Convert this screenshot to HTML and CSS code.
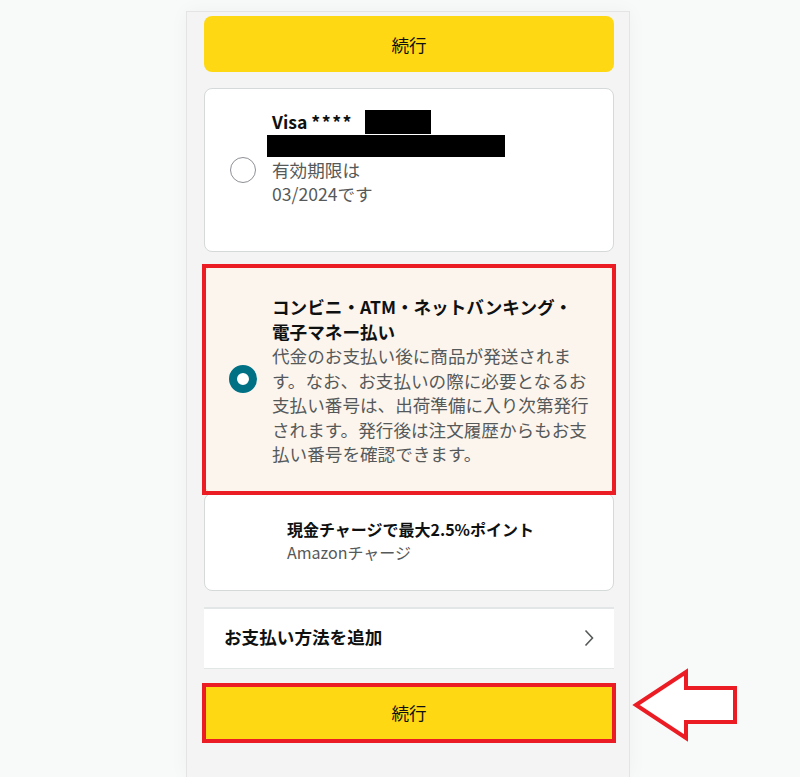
FILE: index.html
```html
<!DOCTYPE html>
<html lang="ja">
<head>
<meta charset="utf-8">
<title>お支払い方法の選択</title>
<link rel="stylesheet" href="styles.css">
</head>
<body>
<div class="panel">
  <button class="btn">続行</button>

  <div class="card">
    <div class="radio-slot"><span class="radio"></span></div>
    <div class="card-body visa">
      <div class="title">Visa <span class="stars">****</span><span class="redact redact-a"></span></div>
      <span class="redact redact-b"></span>
      <div class="muted">有効期限は<br>03/2024です</div>
    </div>
  </div>

  <div class="card selected highlight">
    <div class="radio-slot"><span class="radio checked"></span></div>
    <div class="card-body konbini">
      <div class="title">コンビニ・ATM・ネットバンキング・<br>電子マネー払い</div>
      <div class="muted">代金のお支払い後に商品が発送されます。なお、お支払いの際に必要となるお支払い番号は、出荷準備に入り次第発行されます。発行後は注文履歴からもお支払い番号を確認できます。</div>
    </div>
  </div>

  <div class="card charge">
    <div class="charge-body">
      <div class="charge-title">現金チャージで最大2.5%ポイント</div>
      <div class="charge-sub">Amazonチャージ</div>
    </div>
  </div>

  <div class="add-row">
    <span class="add-label">お支払い方法を追加</span>
    <svg class="chevron" width="10" height="18" viewBox="0 0 10 18"><polyline points="1.5,1.5 8.5,9 1.5,16.5" fill="none" stroke="#565959" stroke-width="1.6"/></svg>
  </div>

  <div class="btn-wrap highlight">
    <button class="btn btn-bottom">続行</button>
  </div>
</div>

<svg class="arrow" width="112" height="80" viewBox="0 0 112 80">
  <polygon points="6,39 56,6 56,22 105,22 105,56 56,56 56,72" fill="#ffffff" stroke="#ec1c24" stroke-width="4" stroke-linejoin="miter"/>
</svg>
</body>
</html>
```
FILE: styles.css
```css
html, body {
  margin: 0;
  padding: 0;
  height: 100%;
  overflow: hidden;
}
body {
  background: #f8f9f9;
  font-family: "Noto Sans CJK JP", "Noto Sans", sans-serif;
  color: #0f1111;
  position: relative;
}
.panel {
  margin: 11px 0 0 186px;
  width: 444px;
  min-height: calc(100vh - 11px);
  box-sizing: border-box;
  background: #f4f4f4;
  border: 1px solid #e4e4e4;
  border-bottom: none;
  box-shadow: 0 0 18px rgba(0, 0, 0, 0.04);
  padding: 4px 15px 0 17px;
  display: flex;
  flex-direction: column;
}
.btn {
  display: block;
  width: 410px;
  height: 56px;
  border: none;
  border-radius: 8px;
  background: #ffd814;
  color: #0f1111;
  font-family: inherit;
  font-size: 17.6px;
  padding: 0;
  margin: 0;
}
.btn-wrap {
  margin-top: 16px;
  width: 410px;
}
.highlight {
  position: relative;
}
.highlight::after {
  content: "";
  position: absolute;
  left: -2px;
  top: -2px;
  right: -2px;
  bottom: -2px;
  border: 4px solid #ec1c24;
  pointer-events: none;
  z-index: 2;
}
.card.highlight::after {
  left: -3px;
  top: -3px;
  right: -3px;
  bottom: -3px;
}
.card {
  display: flex;
  background: #ffffff;
  border: 1px solid #d5d9d9;
  border-radius: 8px;
  margin-top: 16px;
}
.card.selected {
  background: #fcf5ee;
  border-color: #f3d9b9;
  margin-top: 14px;
}
.card.charge {
  margin-top: 0;
}
.radio-slot {
  width: 28px;
  margin-left: 24px;
  margin-right: 15px;
  display: flex;
  align-items: center;
  justify-content: center;
  flex: none;
}
.radio {
  width: 26px;
  height: 26px;
  box-sizing: border-box;
  border: 1.5px solid #8d9096;
  border-radius: 50%;
  background: #fff;
}
.radio.checked {
  width: 28px;
  height: 28px;
  border: 8px solid #007185;
  background: #fff;
}
.card-body {
  width: 322px;
  font-size: 17.6px;
}
.visa {
  padding: 21px 0 45px;
  line-height: 24px;
}
.title {
  font-weight: 700;
}
.stars {
  letter-spacing: 1.5px;
}
.muted {
  color: #565959;
}
.redact {
  display: inline-block;
  background: #000;
}
.redact-a {
  width: 66px;
  height: 24px;
  vertical-align: top;
  margin-left: 12px;
}
.redact-b {
  display: block;
  width: 238px;
  height: 22px;
  margin: 1px 0 1px -5px;
}
.konbini {
  padding: 27px 0 25px;
}
.konbini .title {
  line-height: 25px;
}
.konbini .muted {
  line-height: 24.5px;
}
.charge-body {
  padding: 24px 0 26px 82px;
  font-size: 16px;
  line-height: 23px;
}
.charge-title {
  font-weight: 700;
}
.charge-sub {
  color: #565959;
}
.add-row {
  margin-top: 16px;
  height: 62px;
  box-sizing: border-box;
  background: #ffffff;
  border-top: 2px solid #e3e6e6;
  border-bottom: 1px solid #e3e6e6;
  display: flex;
  align-items: center;
  justify-content: space-between;
  padding: 0 20px 0 20px;
}
.add-label {
  font-size: 17.6px;
  font-weight: 700;
  margin-top: -4px;
}
.chevron {
  display: block;
}
.arrow {
  position: absolute;
  left: 630px;
  top: 666px;
}
```
